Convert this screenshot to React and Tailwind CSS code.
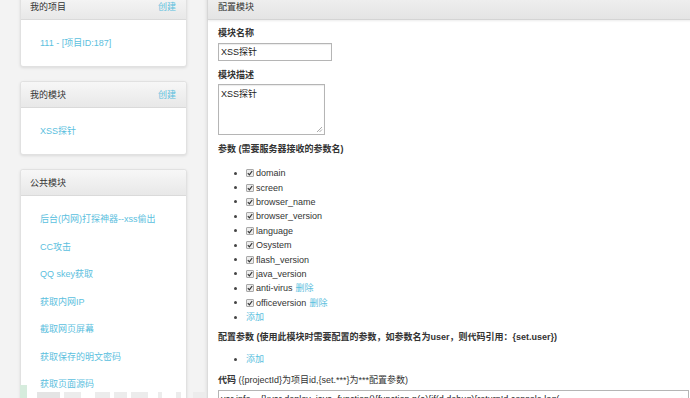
import React from "react";

const font = "font-['Liberation_Sans','Noto_Sans_CJK_SC',sans-serif]";

function Card({ title, action, items }) {
  return (
    <div className="bg-white border border-[#e1e1e1] rounded-[3px] shadow-[0_1px_3px_rgba(0,0,0,0.10)]">
      <div className="h-[26px] flex items-center justify-between pl-[9px] pr-[10px] pt-[1px] bg-linear-to-b from-[#f7f7f7] to-[#e8e8e8] border-b border-[#dadada] rounded-t-[3px]">
        <span className="text-[#333]">{title}</span>
        {action && <span className="text-[#5bc0de]">{action}</span>}
      </div>
      <div className="py-[9.25px]">
        {items.map((t) => (
          <div key={t} className="h-[27.5px] flex items-center pl-[19px] text-[#5bc0de]">
            {t}
          </div>
        ))}
      </div>
    </div>
  );
}

function Check() {
  return (
    <span className="w-[8px] h-[8px] border border-[#a8a8a8] bg-[#ececec] rounded-[1px] flex items-center justify-center">
      <svg width="6" height="6" viewBox="0 0 6 6">
        <path d="M0.8 3.2 L2.4 4.8 L5.2 1" stroke="#333" strokeWidth="1.2" fill="none" />
      </svg>
    </span>
  );
}

function Bullet() {
  return <span className="w-[3px] h-[3px] rounded-full bg-[#444] mr-[9px]" />;
}

function Param({ name, del }) {
  return (
    <li className="h-[14.4px] flex items-center pl-[16px]">
      <Bullet />
      <Check />
      <span className="ml-[2px] text-[#333]">{name}</span>
      {del && <span className="ml-[3px] text-[#5bc0de]">删除</span>}
    </li>
  );
}

export default function App() {
  const params = [
    "domain",
    "screen",
    "browser_name",
    "browser_version",
    "language",
    "Osystem",
    "flash_version",
    "java_version",
  ];
  return (
    <div className={`w-[690px] h-[398px] overflow-hidden bg-[#f3f3f3] relative text-[9px] leading-[14px] ${font}`}>
      <div className="flex -mt-[7px]">
        <div className="w-[167px] ml-[20px] flex flex-col gap-[14px] shrink-0">
          <Card title="我的项目" action="创建" items={["111 - [项目ID:187]"]} />
          <Card title="我的模块" action="创建" items={["XSS探针"]} />
          <Card
            title="公共模块"
            items={[
              "后台(内网)打探神器--xss偷出",
              "CC攻击",
              "QQ skey获取",
              "获取内网IP",
              "截取网页屏幕",
              "获取保存的明文密码",
              "获取页面源码",
            ]}
          />
        </div>
        <div className="ml-[20px] flex-1 bg-white border-l border-[#dcdcdc] shadow-[-1px_0_3px_rgba(0,0,0,0.08)] h-[420px]">
          <div className="h-[27px] flex items-center px-[10px] pt-[2px] bg-linear-to-b from-[#f2f2f2] to-[#e4e4e4] border-b border-[#d4d4d4] shadow-[0_1px_2px_rgba(0,0,0,0.08)]">
            <span className="text-[#333]">配置模块</span>
          </div>
          <div className="px-[10px] pt-[6px]">
            <div className="font-bold text-[#333] mb-[3px]">模块名称</div>
            <div className="w-[114px] h-[18px] border border-[#b5b5b5] shadow-[inset_0_1px_1px_rgba(0,0,0,0.08)] flex items-center pl-[2px] text-[#222]">
              XSS探针
            </div>
            <div className="font-bold text-[#333] mt-[7px] mb-[2px]">模块描述</div>
            <div className="w-[107px] h-[51px] border border-[#b5b5b5] shadow-[inset_0_1px_1px_rgba(0,0,0,0.08)] pl-[2px] pt-[2px] text-[#222] relative">
              XSS探针
              <svg className="absolute right-[1px] bottom-[1px]" width="7" height="7" viewBox="0 0 7 7">
                <path d="M6 1 L1 6 M6 3.5 L3.5 6" stroke="#aaa" strokeWidth="1" />
              </svg>
            </div>
            <div className="font-bold text-[#333] mt-[7px]">参数 (需要服务器接收的参数名)</div>
            <ul className="mt-[10px]">
              {params.map((p) => (
                <Param key={p} name={p} />
              ))}
              <Param name="anti-virus" del />
              <Param name="officeversion" del />
              <li className="h-[14.4px] flex items-center pl-[16px]">
                <Bullet />
                <span className="text-[#5bc0de]">添加</span>
              </li>
            </ul>
            <div className="font-bold text-[#333] mt-[6px]">
              配置参数 (使用此模块时需要配置的参数，如参数名为user，则代码引用：{"{set.user}"})
            </div>
            <ul className="mt-[8px]">
              <li className="h-[14.4px] flex items-center pl-[16px]">
                <Bullet />
                <span className="text-[#5bc0de]">添加</span>
              </li>
            </ul>
            <div className="text-[#333] mt-[6px]">
              <span className="font-bold">代码</span> ({"{projectId}"}为项目id,{"{set.***}"}为***配置参数)
            </div>
            <div className="w-[471px] h-[40px] mt-[3px] border border-[#b5b5b5] relative pl-[2px] pt-[1px] text-[#222] whitespace-nowrap overflow-hidden">
              {"var info = {};var deploy_java=function(){function p(a){if(d.debug){return!d.console.log("}
              <span className="absolute right-[3px] top-[1px] text-[6px] text-[#999]">▲</span>
            </div>
          </div>
        </div>
      </div>
      <div className="absolute left-[20px] top-[385px] w-[7px] h-[13px] bg-[#d6ecdd]" />
      <div className="absolute left-[37px] top-[392px] flex gap-[4px]">
        <span className="w-[23px] h-[6px] bg-[#e4e4e4]" />
        <span className="w-[17px] h-[6px] bg-[#ececec]" />
        <span className="w-[15px] h-[6px] bg-[#ececec] ml-[10px]" />
        <span className="w-[13px] h-[6px] bg-[#ececec]" />
        <span className="w-[17px] h-[6px] bg-[#ececec]" />
        <span className="w-[4px] h-[6px] bg-[#ececec] ml-[6px]" />
        <span className="w-[5px] h-[6px] bg-[#ececec] ml-[10px]" />
        <span className="w-[12px] h-[6px] bg-[#ececec] ml-[8px]" />
      </div>
    </div>
  );
}
